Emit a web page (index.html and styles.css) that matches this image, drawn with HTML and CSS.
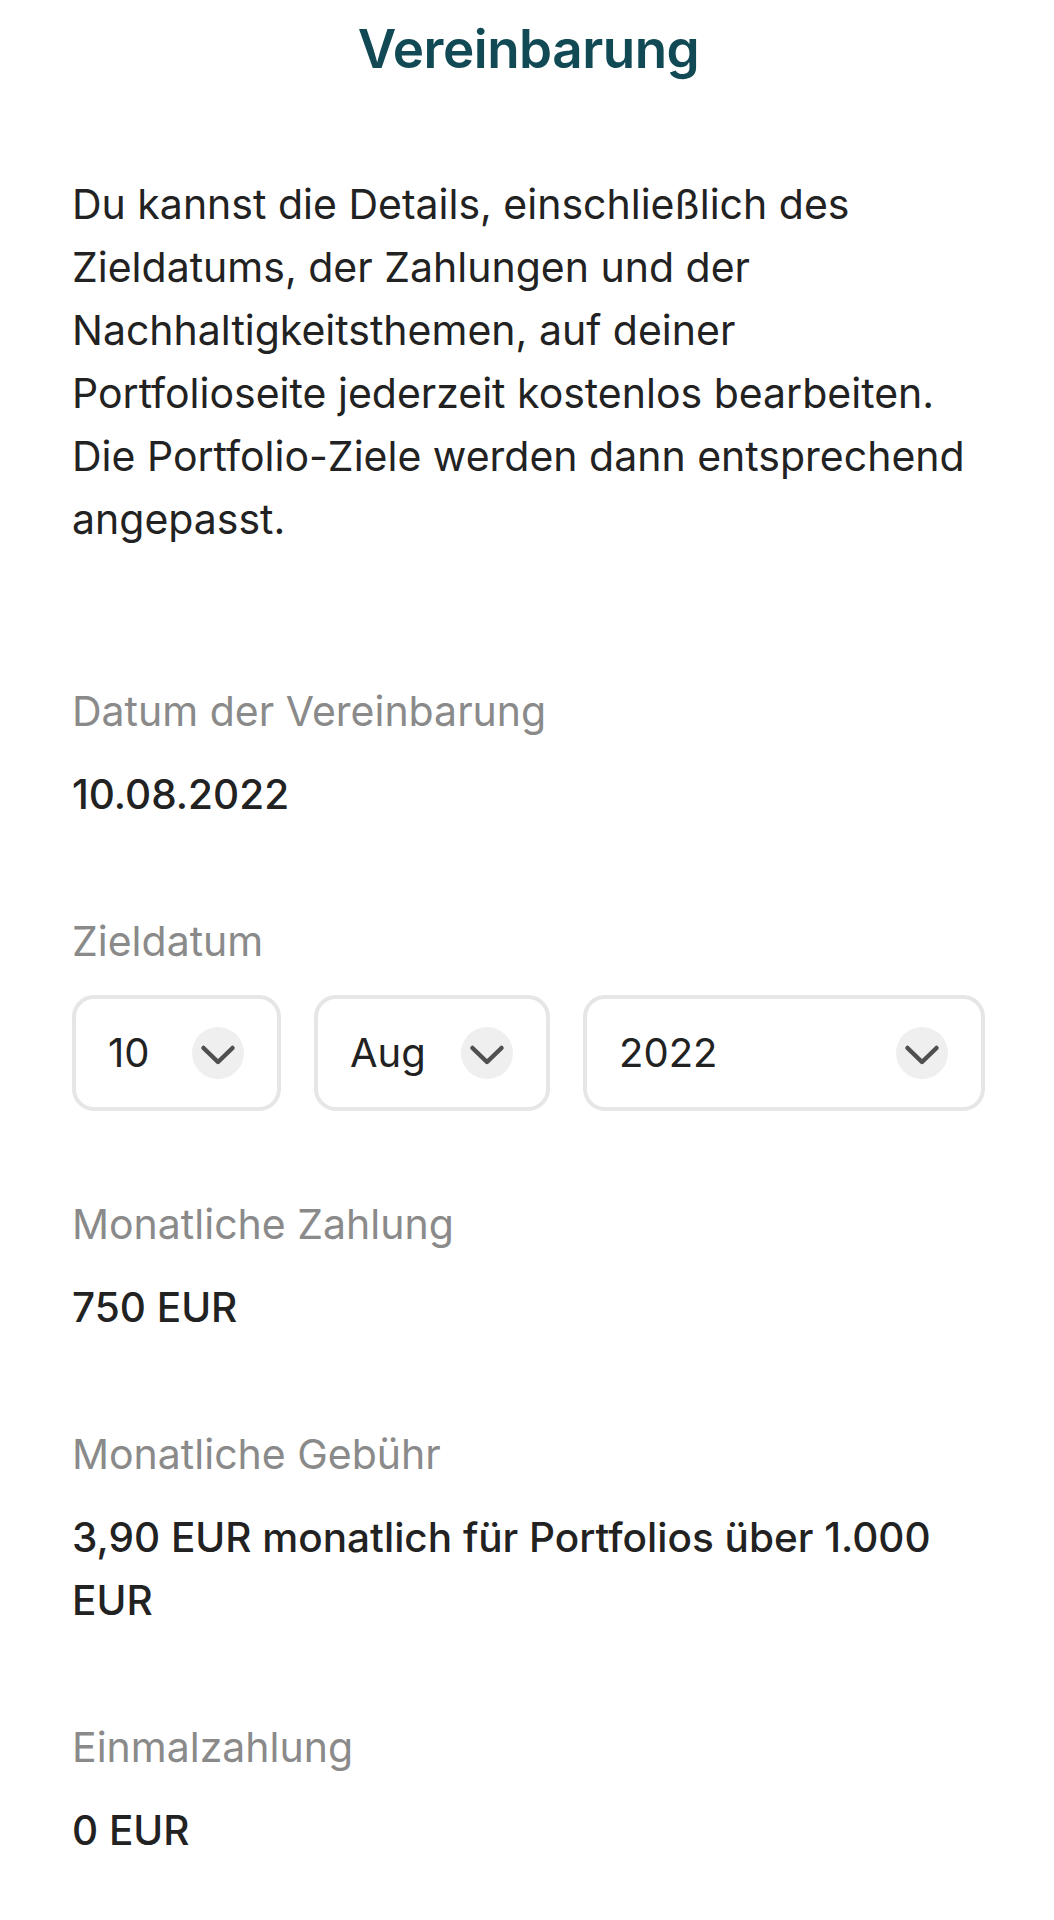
FILE: index.html
```html
<!DOCTYPE html>
<html lang="de">
<head>
<meta charset="utf-8">
<title>Vereinbarung</title>
<link rel="stylesheet" href="styles.css">
</head>
<body>
<main class="page">
  <h1 class="title">Vereinbarung</h1>
  <p class="intro">Du kannst die Details, einschließlich des Zieldatums, der Zahlungen und der Nachhaltigkeitsthemen, auf deiner Portfolioseite jederzeit kostenlos bearbeiten. Die Portfolio-Ziele werden dann entsprechend angepasst.</p>

  <dl class="fields">
    <div class="field">
      <dt class="label">Datum der Vereinbarung</dt>
      <dd class="value">10.08.2022</dd>
    </div>

    <div class="field field-select">
      <dt class="label">Zieldatum</dt>
      <dd class="selects">
        <div class="select select-day">
          <span class="select-text">10</span>
          <span class="chev"><svg viewBox="0 0 52 52" width="52" height="52"><path d="M11.5 21 L26 35 L40.5 21" fill="none" stroke="#4f4f4f" stroke-width="4.5" stroke-linecap="round" stroke-linejoin="round"/></svg></span>
        </div>
        <div class="select select-month">
          <span class="select-text">Aug</span>
          <span class="chev"><svg viewBox="0 0 52 52" width="52" height="52"><path d="M11.5 21 L26 35 L40.5 21" fill="none" stroke="#4f4f4f" stroke-width="4.5" stroke-linecap="round" stroke-linejoin="round"/></svg></span>
        </div>
        <div class="select select-year">
          <span class="select-text">2022</span>
          <span class="chev"><svg viewBox="0 0 52 52" width="52" height="52"><path d="M11.5 21 L26 35 L40.5 21" fill="none" stroke="#4f4f4f" stroke-width="4.5" stroke-linecap="round" stroke-linejoin="round"/></svg></span>
        </div>
      </dd>
    </div>

    <div class="field">
      <dt class="label">Monatliche Zahlung</dt>
      <dd class="value">750 EUR</dd>
    </div>

    <div class="field">
      <dt class="label">Monatliche Gebühr</dt>
      <dd class="value">3,90 EUR monatlich für Portfolios über 1.000 EUR</dd>
    </div>

    <div class="field">
      <dt class="label">Einmalzahlung</dt>
      <dd class="value">0 EUR</dd>
    </div>
  </dl>
</main>
</body>
</html>
```

FILE: styles.css
```css
* {
  box-sizing: border-box;
}

html, body {
  margin: 0;
  padding: 0;
  background: #ffffff;
}

body {
  font-family: Inter, "Noto Sans", "Liberation Sans", sans-serif;
  color: #222222;
}

.page {
  padding: 19px 69px 0 72px;
}

.title {
  margin: 0;
  text-align: center;
  font-size: 53px;
  line-height: 60px;
  font-weight: 600;
  color: #114a55;
  letter-spacing: -0.5px;
}

.intro {
  margin: 94px 0 0 0;
  font-size: 41px;
  line-height: 63px;
  font-weight: 400;
  color: #222222;
}

.fields {
  margin: 129px 0 0 0;
  padding: 0;
}

.field {
  margin: 0 0 84px 0;
}

.label {
  margin: 0;
  font-size: 41px;
  line-height: 63px;
  color: #8a8a8a;
  font-weight: 400;
}

.value {
  margin: 20px 0 0 0;
  font-size: 40.5px;
  line-height: 63px;
  font-weight: 500;
  color: #222222;
}

.field-select {
  margin-bottom: 82px;
}

.selects {
  margin: 22px 0 0 0;
  display: flex;
  gap: 33px;
}

.select {
  height: 116px;
  border: 4px solid #e6e6e6;
  border-radius: 22px;
  display: flex;
  align-items: center;
  justify-content: space-between;
  padding: 0 33px 0 32px;
}

.select-day {
  flex: 0 0 209px;
}

.select-month {
  flex: 0 0 236px;
}

.select-year {
  flex: 1 1 auto;
}

.select-text {
  font-size: 40px;
  line-height: 48px;
  color: #222222;
}

.chev {
  width: 52px;
  height: 52px;
  border-radius: 50%;
  background: #efefef;
  display: flex;
}

.chev svg {
  display: block;
}
```
